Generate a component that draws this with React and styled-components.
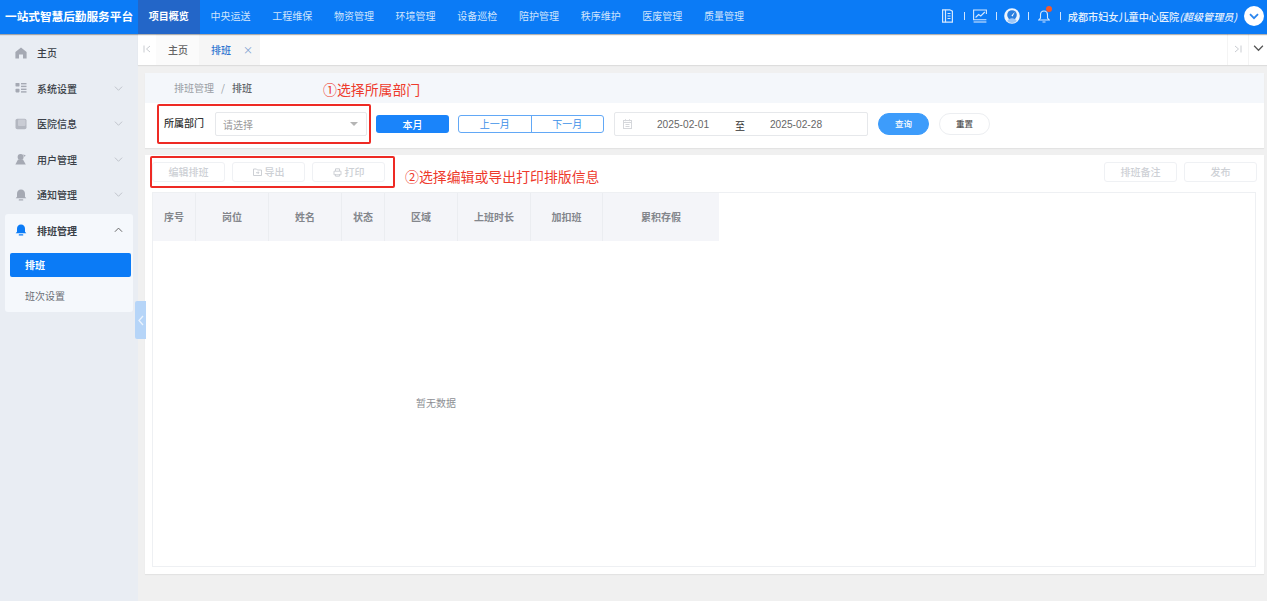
import React from "react";
import styled, { createGlobalStyle } from "styled-components";

const Global = createGlobalStyle`
  html, body { margin: 0; padding: 0; height: 100%; overflow: hidden; background: #f0f0f0; }
  body { font-family: "Noto Sans CJK SC", "Liberation Sans", sans-serif; font-size: 10px; color: #333; }
  * { box-sizing: border-box; }
`;

const Page = styled.div`position: relative; width: 1267px; height: 601px; display: flex; flex-direction: column;`;

const TopBar = styled.header`
  height: 34px; flex: none; display: flex; align-items: stretch; background: #0b7bf6; color: #fff;
  box-shadow: 0 1px 1px rgba(0,0,0,.3); position: relative; z-index: 2;
`;
const Brand = styled.div`width: 138px; flex: none; padding-left: 5px; font-size: 11.65px; font-weight: 700; line-height: 32px; white-space: nowrap;`;
const NavItem = styled.div`
  width: 61.7px; flex: none; text-align: center; line-height: 32px; font-size: 10px; white-space: nowrap;
  font-weight: ${p => (p.$active ? 700 : 400)};
  color: ${p => (p.$active ? "#fff" : "#cfe4fd")};
  background: ${p => (p.$active ? "#2366c8" : "transparent")};
`;
const TopRight = styled.div`margin-left: auto; display: flex; align-items: center; padding: 0 3px 2px 0;`;
const TopIcon = styled.div`width: 16px; height: 16px; display: flex; align-items: center; justify-content: center; position: relative;`;
const Sep = styled.i`width: 1px; height: 8px; background: #cfe4fd; margin: 0 7px 0 8px;`;
const Dot = styled.i`position: absolute; top: -2px; right: 0; width: 6px; height: 6px; border-radius: 50%; background: #f4592c;`;
const UserName = styled.div`font-size: 10.15px; font-weight: 500; white-space: nowrap; color: #e6f1fe; em { font-style: italic; }`;
const Avatar = styled.div`width: 20px; height: 20px; border-radius: 50%; background: #fff; margin-left: 7px; display: flex; align-items: center; justify-content: center;`;

const Body = styled.div`flex: 1; display: flex; min-height: 0;`;
const Sidebar = styled.aside`width: 138px; flex: none; background: #e9edf3; padding: 1px 5px 0; display: flex; flex-direction: column;`;
const MenuRow = styled.div`
  height: 35.5px; display: flex; align-items: center; padding: 0 10px 0 10px; font-size: 10px; flex: none;
  color: #3a3f47; font-weight: ${p => (p.$active ? 700 : 500)}; position: relative;
  svg.ic { margin-right: 10px; width: 12px; height: 12px; flex: none; }
`;
const Caret = styled.span`margin-left: auto; display: flex;`;
const ActiveGroup = styled.div`background: #f5f8fc; border-radius: 3px; height: 98px; flex: none; margin-top: 1px;`;
const GroupHead = styled(MenuRow)`height: 33px;`;
const SubItem = styled.div`
  margin: 6.5px 2px 0 5px; height: 24px; line-height: 24px; padding-left: 15px; border-radius: 2px; font-size: 10px; font-weight: ${p => (p.$active ? 700 : 400)};
  background: ${p => (p.$active ? "#0b7bf6" : "transparent")}; color: ${p => (p.$active ? "#fff" : "#6b6f76")};
`;
const SubPlain = styled(SubItem)`margin-top: 7px;`;
const Handle = styled.div`
  position: absolute; left: 135px; top: 301px; width: 11px; height: 38px; background: #b6d5f8; border-radius: 2px 0 0 2px;
  display: flex; align-items: center; justify-content: center; z-index: 3;
`;

const Main = styled.main`flex: 1; min-width: 0; display: flex; flex-direction: column;`;
const TabBar = styled.div`height: 31px; flex: none; background: #fff; display: flex; align-items: stretch; box-shadow: 0 1px 1px rgba(0,0,0,.08);`;
const TabEdge = styled.div`width: 18px; display: flex; align-items: center; justify-content: center; padding-bottom: 2px;`;
const Tab = styled.div`
  width: ${p => p.$w}px; display: flex; align-items: center; justify-content: ${p => (p.$active ? "flex-start" : "center")};
  padding-left: ${p => (p.$active ? 12 : 1)}px;
  background: ${p => (p.$active ? "#f6f6f6" : "#fbfbfb")}; color: ${p => (p.$active ? "#2f74d0" : "#666")}; font-size: 10px; font-weight: 500;
`;
const TabClose = styled.span`color: #7d9fd0; margin-left: 12px; font-size: 10px; font-weight: 400;`;
const TabRight = styled.div`margin-left: auto; display: flex; align-items: stretch;`;
const TabEndBtn = styled.div`width: ${p => p.$w}px; display: flex; align-items: center; justify-content: center; border-left: 1px solid #f4f4f4; padding-bottom: 2px;`;

const Content = styled.div`flex: 1; padding: 8px 3px 27px 7px; display: flex; flex-direction: column; gap: 7px; min-height: 0;`;
const FilterCard = styled.section`background: #fff; height: 75px; flex: none; box-shadow: 0 1px 1px rgba(0,0,0,.05); display: flex; flex-direction: column;`;
const Breadcrumb = styled.div`height: 30px; flex: none; background: #f4f7fb; display: flex; align-items: center; padding: 0 0 1px 29px; font-size: 10px; color: #9a9ea5;
  span { margin: 0 7px; } b { color: #606368; font-weight: 500; }`;
const FilterRow = styled.div`height: 45px; display: flex; align-items: flex-start; padding: 9px 0 0 19px;`;
const FieldLabel = styled.label`font-size: 10px; color: #333; font-weight: 500; width: 51px; flex: none; line-height: 22px;`;
const SelectBox = styled.div`
  width: 152px; height: 24px; border: 1px solid #e6e8eb; border-radius: 2px; display: flex; align-items: center; padding: 0 8px 0 7px; color: #9a9a9a; font-size: 10px; flex: none;
`;
const Arrow = styled.i`margin-left: auto; width: 0; height: 0; border: 4px solid transparent; border-top: 4px solid #b5b5b5; border-bottom: 0;`;
const MonthBtn = styled.button`
  width: 73px; height: 18px; margin: 3px 0 0 9px; border: 0; border-radius: 3px; background: #1a84fa; color: #fff; font: 500 10px "Noto Sans CJK SC", sans-serif; padding: 0; flex: none;
`;
const MonthGroup = styled.div`display: flex; margin: 3px 0 0 9px; height: 18px; border: 1px solid #62a8f6; border-radius: 3px; width: 146px; flex: none;`;
const MonthSeg = styled.div`flex: 1; text-align: center; line-height: 16px; color: #3d8fe8; font-size: 10px; & + & { border-left: 1px solid #62a8f6; }`;
const DateBox = styled.div`
  width: 254px; height: 24px; margin-left: 10px; border: 1px solid #e6e8eb; border-radius: 2px; display: flex; align-items: center; font: 10.2px "Liberation Sans", sans-serif; color: #666; padding-left: 8px; flex: none;
`;
const DateValue = styled.span`width: ${p => p.$w}px; text-align: center; flex: none;`;
const DateTo = styled.span`font: 10px "Noto Sans CJK SC", sans-serif; color: #333; width: 12px; padding-top: 3px; flex: none; text-align: center;`;
const Pill = styled.button`
  width: 51px; height: 22px; margin: 1px 0 0 ${p => p.$ml}px; border-radius: 11px; font: 500 8.5px "Noto Sans CJK SC", sans-serif; padding: 0 0 2px; flex: none;
  background: ${p => (p.$primary ? "#3d9cfb" : "#fff")}; color: ${p => (p.$primary ? "#fff" : "#555")}; border: 1px solid ${p => (p.$primary ? "#3d9cfb" : "#eceef1")};
`;

const TableCard = styled.section`flex: 1; background: #fff; padding: 7px; display: flex; flex-direction: column; min-height: 0; box-shadow: 0 1px 1px rgba(0,0,0,.05);`;
const Toolbar = styled.div`height: 20px; flex: none; display: flex; gap: 7px; margin-bottom: 10px;`;
const ToolBtn = styled.div`
  width: 73px; height: 20px; border: 1px solid #eff1f4; border-radius: 3px; display: flex; align-items: center; justify-content: center; gap: 3px; padding-bottom: 2px;
  color: #cdd0d5; font-size: 10px; font-weight: 500; flex: none; ${p => p.$first && "margin-left: auto;"}
  svg { margin-top: 2px; }
`;
const TableFrame = styled.div`flex: 1; border: 1px solid #eef0f3; min-height: 0; display: flex; flex-direction: column; margin-right: 1px;`;
const HeadRow = styled.div`display: grid; grid-template-columns: 43px 73px 73px 43px 73px 73px 72px 116px; width: 566px; height: 48px; flex: none; background: #f4f5f9;`;
const HeadCell = styled.div`display: flex; align-items: center; justify-content: center; color: #83868c; font-size: 10px; font-weight: 700; border-right: 1px solid #ebedf1; padding-bottom: 1px; &:last-child { border-right: 0; }`;
const Empty = styled.div`width: 566px; text-align: center; color: #8d8f94; font-size: 10px; padding-top: 154px;`;

const NoteBox = styled.div`position: absolute; border: 2px solid #ee2a24; border-radius: 2px; pointer-events: none; z-index: 4;
  left: ${p => p.$x}px; top: ${p => p.$y}px; width: ${p => p.$w}px; height: ${p => p.$h}px;`;
const NoteText = styled.div`position: absolute; color: #ee3a2c; font-size: 13.9px; line-height: 18px; white-space: nowrap; z-index: 4; left: ${p => p.$x}px; top: ${p => p.$y}px;`;

const Chevron = ({ up, color = "#c0c4cb", w = 9 }) => (
  <svg width={w} height={w * 0.6} viewBox="0 0 10 6" fill="none" stroke={color} strokeWidth="1.1">
    <path d={up ? "M1 5.3 5 1.2 9 5.3" : "M1 .7 5 4.8 9 .7"} />
  </svg>
);
const HomeIc = () => (
  <svg className="ic" viewBox="0 0 12 12" fill="#a5a9b3"><path d="M6 .6 11.6 5v6.4H8V7.6H4v3.8H.4V5z" /></svg>
);
const GridIc = () => (
  <svg className="ic" viewBox="0 0 12 12" fill="#a5a9b3">
    <rect x=".5" y="1" width="4" height="3.4" rx=".6" /><rect x=".5" y="6.8" width="4" height="3.6" rx=".8" />
    <rect x="6" y="1" width="5.5" height="1.4" /><rect x="6" y="3.7" width="5.5" height="1.4" /><rect x="6" y="6.6" width="5.5" height="1.4" /><rect x="6" y="9.2" width="5.5" height="1.4" />
  </svg>
);
const BookIc = () => (
  <svg className="ic" viewBox="0 0 12 12"><rect x=".5" y=".8" width="11" height="10.4" rx="1.8" fill="#b3b7c0" /><rect x="3" y="1.5" width="7.5" height="6.5" rx="1" fill="#c9ccd4" /></svg>
);
const UserIc = () => (
  <svg className="ic" viewBox="0 0 12 12" fill="#a5a9b3"><circle cx="5.6" cy="4" r="3" /><path d="M.4 11.400 3 6.500h5l2.800 4.900z" /><path d="M8.300 1.200 10.800 2.800 9 3.800z" /></svg>
);
const BellIc = ({ c = "#a5a9b3" }) => (
  <svg className="ic" viewBox="0 0 12 12" fill={c}><path d="M6 .5c2.500 0 4 1.800 4 4.200v3l1.300 1.600H.7L2 7.700V4.700C2 2.300 3.500.5 6 .5z" /><rect x="3.700" y="10.300" width="4.600" height="1.200" rx=".6" /></svg>
);
const JumpIc = ({ right }) => (
  <svg width="8" height="8" viewBox="0 0 8 8" fill="none" stroke="#c9ccd1" strokeWidth="1">
    <path d={right ? "M1 1 4.500 4 1 7M7 .5v7" : "M7 1 3.500 4 7 7M1 .5v7"} />
  </svg>
);

const nav = ["中央运送", "工程维保", "物资管理", "环境管理", "设备巡检", "陪护管理", "秩序维护", "医废管理", "质量管理"];
const cols = ["序号", "岗位", "姓名", "状态", "区域", "上班时长", "加扣班", "累积存假"];

export default function App() {
  return (
    <Page>
      <Global />
      <TopBar>
        <Brand>一站式智慧后勤服务平台</Brand>
        <NavItem $active>项目概览</NavItem>
        {nav.map(n => <NavItem key={n}>{n}</NavItem>)}
        <TopRight>
          <TopIcon>
            <svg width="11" height="14" viewBox="0 0 11 14" fill="none" stroke="#d6e8fd" strokeWidth="1.2">
              <path d="M.6.8h7.200l2.600 1.400v11H.6z" /><path d="M3.500.8v12.400M5.500 4.500h3M5.500 7h3M5.500 9.500h3" />
            </svg>
          </TopIcon>
          <Sep />
          <TopIcon>
            <svg width="14" height="14" viewBox="0 0 14 14" fill="none" stroke="#d6e8fd" strokeWidth="1.1">
              <path d="M13.400 5V1H.6v9.800h12.800" /><path d="M2.600 8.500l3-3 2.200 1.500L11.800 3" /><path d="M.6 13h12.800" />
            </svg>
          </TopIcon>
          <Sep />
          <TopIcon>
            <svg width="16" height="16" viewBox="0 0 16 16">
              <circle cx="8" cy="8" r="7.800" fill="#eef5fe" />
              <circle cx="8" cy="7" r="4.800" fill="#2a7fe0" />
              <path d="M7.400 7.600 10.800 4 8.600 8.400z" fill="#fff" />
              <path d="M3.200 13c1-1.800 2.900-2.700 4.800-2.700s3.800.9 4.800 2.700a7 7 0 0 1-9.600 0z" fill="#9cc6f6" />
            </svg>
          </TopIcon>
          <Sep />
          <TopIcon>
            <svg width="12" height="14" viewBox="0 0 12 14" fill="none" stroke="#d6e8fd" strokeWidth="1.100">
              <path d="M6 2c2.300 0 3.500 1.800 3.500 4v3l1.700 2H.8l1.700-2V6c0-2.200 1.200-4 3.500-4zM4.500 13h3" />
            </svg>
            <Dot />
          </TopIcon>
          <Sep />
          <UserName>成都市妇女儿童中心医院<em>(超级管理员)</em></UserName>
          <Avatar>
            <svg width="10" height="7" viewBox="0 0 10 7" fill="none" stroke="#2b86ee" strokeWidth="1.800"><path d="M1 1.200 5 5.200 9 1.200" /></svg>
          </Avatar>
        </TopRight>
      </TopBar>
      <Body>
        <Sidebar>
          <MenuRow><HomeIc />主页</MenuRow>
          <MenuRow><GridIc />系统设置<Caret><Chevron /></Caret></MenuRow>
          <MenuRow><BookIc />医院信息<Caret><Chevron /></Caret></MenuRow>
          <MenuRow><UserIc />用户管理<Caret><Chevron /></Caret></MenuRow>
          <MenuRow><BellIc />通知管理<Caret><Chevron /></Caret></MenuRow>
          <ActiveGroup>
            <GroupHead $active><BellIc c="#0b7bf6" />排班管理<Caret><Chevron up color="#666" /></Caret></GroupHead>
            <SubItem $active>排班</SubItem>
            <SubPlain>班次设置</SubPlain>
          </ActiveGroup>
        </Sidebar>
        <Main>
          <TabBar>
            <TabEdge><JumpIc /></TabEdge>
            <Tab $w={43}>主页</Tab>
            <Tab $w={61} $active>排班<TabClose>×</TabClose></Tab>
            <TabRight>
              <TabEndBtn $w={21}><JumpIc right /></TabEndBtn>
              <TabEndBtn $w={19}><Chevron color="#555" w={11} /></TabEndBtn>
            </TabRight>
          </TabBar>
          <Content>
            <FilterCard>
              <Breadcrumb>排班管理<span>/</span><b>排班</b></Breadcrumb>
              <FilterRow>
                <FieldLabel>所属部门</FieldLabel>
                <SelectBox>请选择<Arrow /></SelectBox>
                <MonthBtn>本月</MonthBtn>
                <MonthGroup><MonthSeg>上一月</MonthSeg><MonthSeg>下一月</MonthSeg></MonthGroup>
                <DateBox>
                  <svg width="9" height="10" viewBox="0 0 9 10" fill="none" stroke="#d5d7db" strokeWidth="1"><rect x=".5" y="1.500" width="8" height="8" /><path d="M.5 3.500h8M2.500 5.500h4M2.500 7.500h4M2.500.2v2M6.500.2v2" /></svg>
                  <DateValue $w={102}>2025-02-01</DateValue>
                  <DateTo>至</DateTo>
                  <DateValue $w={100}>2025-02-28</DateValue>
                </DateBox>
                <Pill $primary $ml={10}>查询</Pill>
                <Pill $ml={10}>重置</Pill>
              </FilterRow>
            </FilterCard>
            <TableCard>
              <Toolbar>
                <ToolBtn>编辑排班</ToolBtn>
                <ToolBtn>
                  <svg width="9" height="8" viewBox="0 0 9 8" fill="none" stroke="#cdd0d5"><path d="M.5 1h3l1 1h4v5.500h-8zM3 4.700h3M4.800 3.500l1.200 1.200-1.200 1.200" /></svg>
                  导出
                </ToolBtn>
                <ToolBtn>
                  <svg width="9" height="9" viewBox="0 0 9 9" fill="none" stroke="#cdd0d5"><path d="M2.500 3V.8h4V3M1 3.200h7v3.600H1zM2.500 6v2.200h4V6" /></svg>
                  打印
                </ToolBtn>
                <ToolBtn $first>排班备注</ToolBtn>
                <ToolBtn>发布</ToolBtn>
              </Toolbar>
              <TableFrame>
                <HeadRow>{cols.map(c => <HeadCell key={c}>{c}</HeadCell>)}</HeadRow>
                <Empty>暂无数据</Empty>
              </TableFrame>
            </TableCard>
          </Content>
        </Main>
      </Body>
      <Handle>
        <svg width="6" height="11" viewBox="0 0 6 11" fill="none" stroke="#eaf3fe" strokeWidth="1.300"><path d="M5 1 1 5.500 5 10" /></svg>
      </Handle>
      <NoteText $x={323} $y={80}>①选择所属部门</NoteText>
      <NoteBox $x={157} $y={104} $w={214} $h={40} />
      <NoteBox $x={150} $y={156} $w={245} $h={32} />
      <NoteText $x={405} $y={167}>②选择编辑或导出打印排版信息</NoteText>
    </Page>
  );
}
